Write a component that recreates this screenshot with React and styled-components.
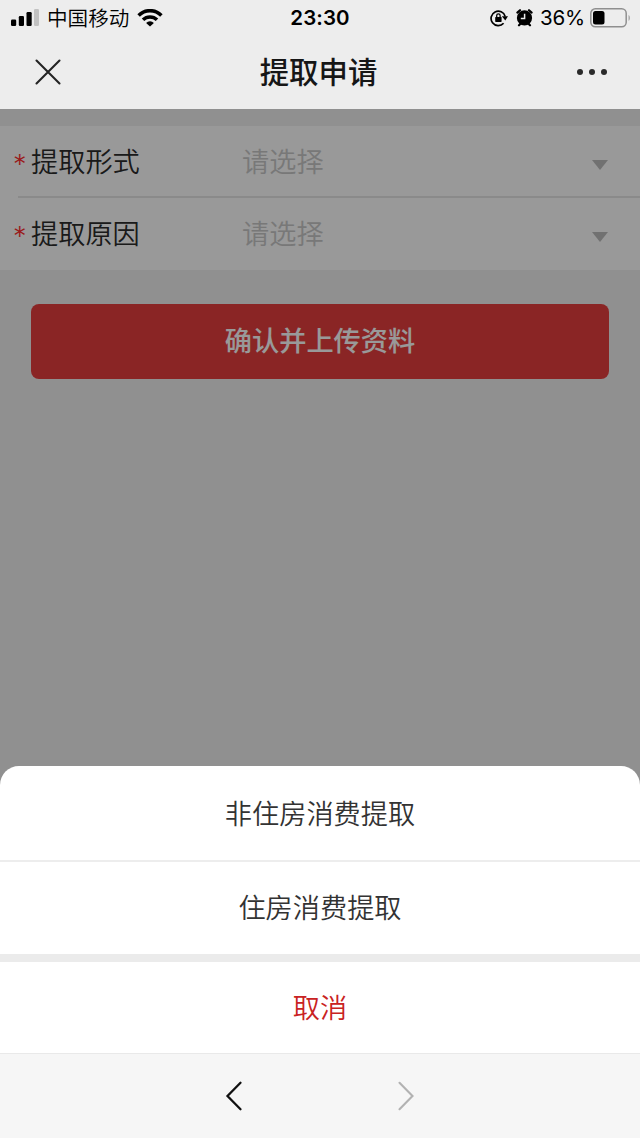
import React from "react";
import styled, { createGlobalStyle } from "styled-components";

const fields = [
  { label: "提取形式", placeholder: "请选择" },
  { label: "提取原因", placeholder: "请选择" },
];

const options = ["非住房消费提取", "住房消费提取"];

function SignalIcon() {
  return (
    <svg width="28" height="18" viewBox="0 0 28 18">
      <rect x="0" y="10.5" width="5.2" height="6.5" rx="1.2" />
      <rect x="7.8" y="7" width="5.2" height="10" rx="1.2" />
      <rect x="15.5" y="3" width="5.2" height="14" rx="1.2" />
      <rect x="23" y="0" width="5" height="17" rx="1.2" fill="#c2c2c2" />
    </svg>
  );
}

function WifiIcon() {
  return (
    <svg width="26" height="18" viewBox="0 0 26 18" fill="none" stroke="#000" strokeWidth="3.5">
      <path d="M1.6 6.4a16 16 0 0 1 22.8 0" />
      <path d="M6 10.8a9.9 9.9 0 0 1 14 0" />
      <path d="M13 17.5l-3.9-3.6a5.6 5.6 0 0 1 7.8 0z" fill="#000" stroke="none" />
    </svg>
  );
}

function RotationLockIcon() {
  return (
    <svg width="18" height="18" viewBox="0 0 18 18" fill="none" stroke="#000" strokeWidth="1.7">
      <path d="M13.6 14.2A7.2 7.2 0 1 1 15.2 7.4" />
      <path d="M11.8 7.2h6.2l-2.7 4.4z" fill="#000" stroke="none" />
      <rect x="5.2" y="7.9" width="6.4" height="5" rx="0.6" fill="#000" stroke="none" />
      <path d="M6.7 8.2V6.6a1.7 1.7 0 0 1 3.4 0v1.6" strokeWidth="1.3" />
    </svg>
  );
}

function AlarmIcon() {
  return (
    <svg width="17" height="18" viewBox="0 0 17 18">
      <circle cx="8.5" cy="8.9" r="7.6" />
      <path d="M1.4 3.6L4 1.2M15.6 3.6L13 1.2M3 16.3l2-2M14 16.3l-2-2" stroke="#000" strokeWidth="2.2" strokeLinecap="round" />
      <path d="M8.6 4.7v4.7H4.8" fill="none" stroke="#ededed" strokeWidth="1.5" />
    </svg>
  );
}

function BatteryIcon() {
  return (
    <svg width="41" height="20" viewBox="0 0 41 20">
      <rect x="0.8" y="0.8" width="35.4" height="18" rx="4.5" fill="none" stroke="#8f8f8f" strokeWidth="1.5" />
      <rect x="3" y="3" width="11.5" height="13.6" rx="2.5" />
      <path d="M38.6 7c1.5.6 1.5 5.2 0 5.8z" fill="#8f8f8f" />
    </svg>
  );
}

export default function App() {
  return (
    <>
      <GlobalStyle />
      <Wrapper>
        <StatusBar>
          <StatusGroup>
            <SignalIcon />
            <Carrier>中国移动</Carrier>
            <WifiIcon />
          </StatusGroup>
          <Clock>23:30</Clock>
          <StatusGroup $end>
            <RotationLockIcon />
            <AlarmIcon />
            <Percent>36%</Percent>
            <BatteryIcon />
          </StatusGroup>
        </StatusBar>
        <NavBar>
          <NavButton aria-label="关闭">
            <svg width="26" height="26" viewBox="0 0 26 26" stroke="#242424" strokeWidth="2.1" strokeLinecap="round">
              <path d="M1.5 1.5l23 23M24.5 1.5l-23 23" />
            </svg>
          </NavButton>
          <Title>提取申请</Title>
          <NavButton aria-label="更多" $end>
            <svg width="32" height="8" viewBox="0 0 32 8" fill="#2a2a2a">
              <circle cx="4" cy="4" r="3" />
              <circle cx="16" cy="4" r="3" />
              <circle cx="28" cy="4" r="3" />
            </svg>
          </NavButton>
        </NavBar>
        <Page>
          <Form>
            {fields.map((field) => (
              <Field key={field.label}>
                <Required>*</Required>
                <Label>{field.label}</Label>
                <Placeholder>{field.placeholder}</Placeholder>
                <Arrow />
              </Field>
            ))}
          </Form>
          <SubmitButton>确认并上传资料</SubmitButton>
          <Mask />
          <ActionSheet>
            {options.map((option) => (
              <Option key={option}>{option}</Option>
            ))}
            <Cancel>取消</Cancel>
          </ActionSheet>
        </Page>
        <BottomBar>
          <svg width="18" height="30" viewBox="0 0 18 30" fill="none" stroke="#111" strokeWidth="2.3" strokeLinecap="round">
            <path d="M15.5 1.8L2.5 15l13 13.2" />
          </svg>
          <svg width="18" height="30" viewBox="0 0 18 30" fill="none" stroke="#b2b2b2" strokeWidth="2.1" strokeLinecap="round">
            <path d="M2.5 1.8L15.5 15l-13 13.2" />
          </svg>
        </BottomBar>
      </Wrapper>
    </>
  );
}

const GlobalStyle = createGlobalStyle`
  * {
    box-sizing: border-box;
  }

  body {
    margin: 0;
    font-family: Inter, "Noto Sans CJK SC", sans-serif;
  }

  button {
    padding: 0;
    border: 0;
    background: none;
    font-family: inherit;
  }

  svg {
    display: block;
    flex-shrink: 0;
  }
`;

const Wrapper = styled.div`
  display: flex;
  flex-direction: column;
  width: 640px;
  height: 1138px;
  overflow: hidden;
  background: #ededed;
`;

const StatusBar = styled.header`
  display: grid;
  grid-template-columns: 1fr auto 1fr;
  align-items: center;
  height: 35px;
  padding: 0 9px 0 11px;
  color: #000;
`;

const StatusGroup = styled.div`
  display: flex;
  align-items: center;
  justify-content: ${({ $end }) => ($end ? "flex-end" : "flex-start")};
  gap: 8px;
`;

const Carrier = styled.span`
  padding-top: 2px;
  font-size: 20.6px;
  font-weight: 350;
  line-height: 32px;
`;

const Clock = styled.span`
  margin-right: 2px;
  font-size: 20.5px;
  font-weight: 600;
  letter-spacing: 0.1px;
`;

const Percent = styled.span`
  margin: 0 -3px 0 -1px;
  font-size: 20.5px;
  letter-spacing: -0.2px;
`;

const NavBar = styled.nav`
  display: grid;
  grid-template-columns: 26px 1fr 32px;
  align-items: center;
  height: 74px;
  padding: 0 32px 0 35px;
`;

const NavButton = styled.button`
  justify-self: ${({ $end }) => ($end ? "end" : "start")};
`;

const Title = styled.h1`
  margin: 0;
  padding-top: 2px;
  color: #161616;
  font-size: 29.4px;
  font-weight: 500;
  line-height: 44px;
  text-align: center;
`;

const Page = styled.main`
  position: relative;
  flex: 1;
  padding-top: 17px;
  background: #f0f0f0;
`;

const Form = styled.div`
  background: #fff;
`;

const Field = styled.div`
  display: flex;
  align-items: center;
  height: 70px;
  padding: 0 32px 2px 13px;
  font-size: 27.2px;
  font-weight: 350;

  & + & {
    height: 74px;
    background: linear-gradient(#e6e6e6, #e6e6e6) 18px 0 / 100% 2px no-repeat;
  }
`;

const Required = styled.span`
  width: 18px;
  padding-top: 9px;
  color: #ff3030;
  font-size: 27px;
`;

const Label = styled.span`
  width: 211px;
  color: #2c2c2c;
`;

const Placeholder = styled.span`
  flex: 1;
  color: #c8c8c8;
`;

const Arrow = styled.i`
  margin-top: 9px;
  border: 8px solid transparent;
  border-top: 10px solid #bdbdbd;
  border-bottom: 0;
`;

const SubmitButton = styled.button`
  display: block;
  width: 578px;
  height: 75px;
  margin: 34px 31px 0;
  padding-bottom: 5px;
  border-radius: 8px;
  background: #e63f3f;
  color: #fff;
  font-size: 27.2px;
  font-weight: 500;
`;

const Mask = styled.div`
  position: absolute;
  inset: 0;
  background: rgba(0, 0, 0, 0.4);
`;

const ActionSheet = styled.div`
  position: absolute;
  right: 0;
  bottom: 0;
  left: 0;
  overflow: hidden;
  border-radius: 19px 19px 0 0;
  background: #fff;
`;

const Option = styled.button`
  display: block;
  width: 100%;
  height: 94px;
  padding-bottom: 3px;
  color: #333;
  font-size: 27.2px;
  font-weight: 350;

  & + & {
    padding-bottom: 5px;
    border-top: 2px solid #ededed;
  }
`;

const Cancel = styled(Option)`
  height: 99px;
  padding-bottom: 3px !important;
  border-top: 8px solid #ebebeb !important;
  color: #c92222;
`;

const BottomBar = styled.footer`
  display: flex;
  align-items: center;
  justify-content: center;
  gap: 154px;
  height: 85px;
  border-top: 1px solid #e9e9e9;
  background: #f6f6f6;
`;
